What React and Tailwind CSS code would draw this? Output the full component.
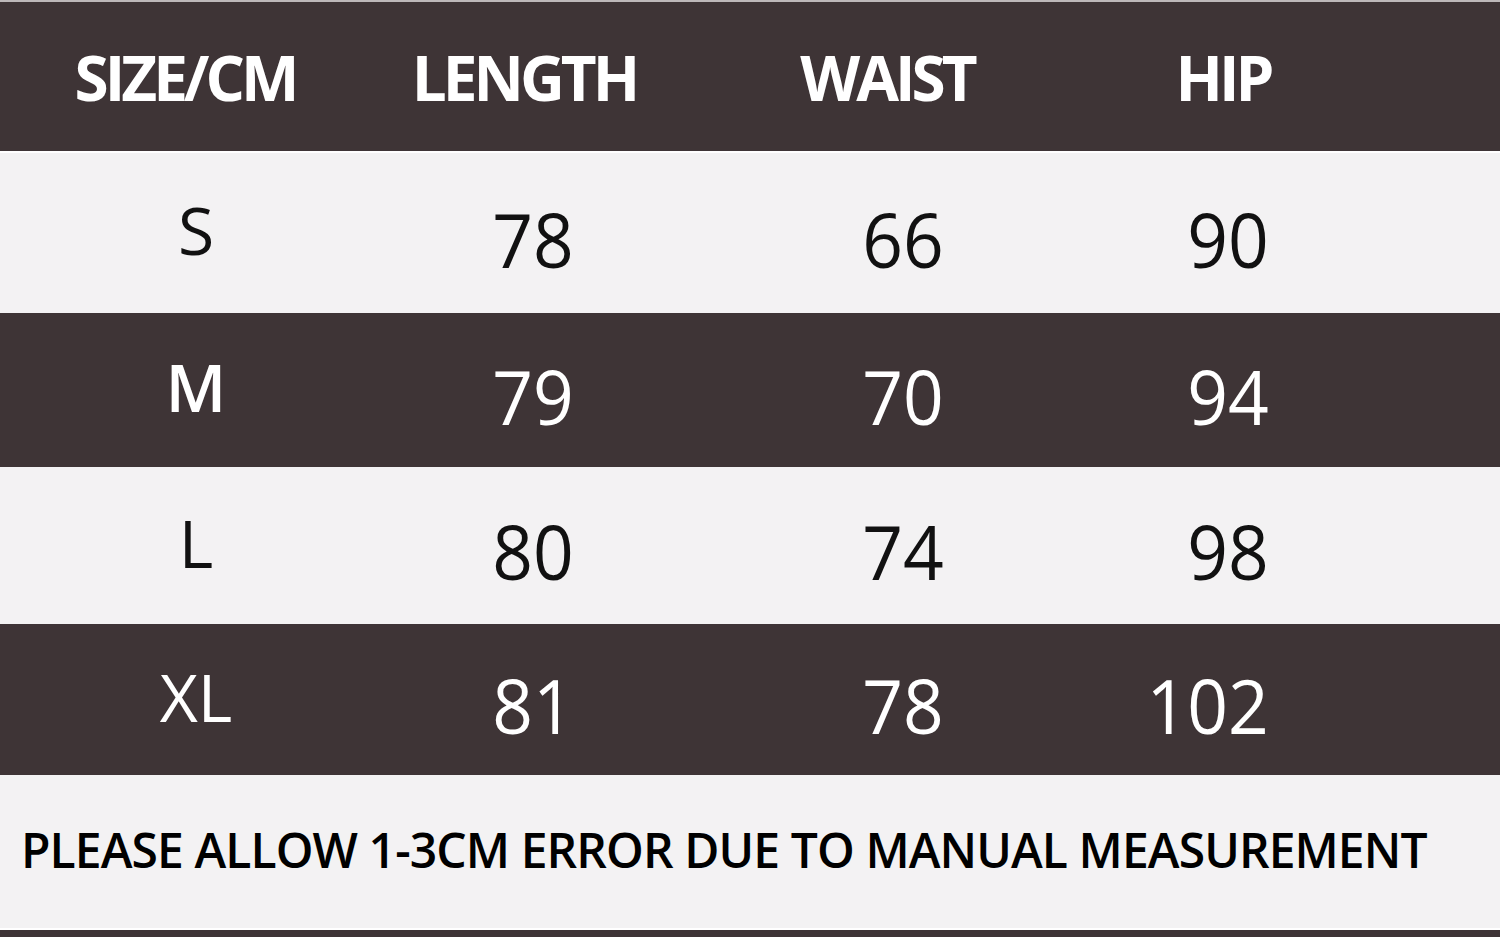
const headers = ["SIZE/CM", "LENGTH", "WAIST", "HIP"];

const rows = [
  { size: "S", values: ["78", "66", "90"], dark: false, h: "h-[160px]", w: "font-normal" },
  { size: "M", values: ["79", "70", "94"], dark: true, h: "h-[154px]", w: "font-semibold" },
  { size: "L", values: ["80", "74", "98"], dark: false, h: "h-[157px]", w: "font-normal" },
  { size: "XL", values: ["81", "78", "102"], dark: true, h: "h-[151px]", w: "font-normal" },
];

const Value = ({ children }) => (
  <div className="text-right text-[75px] leading-none pt-[12px]">
    <span className="inline-block origin-right scale-x-[0.95]">{children}</span>
  </div>
);

const SizeRow = ({ row }) => {
  const tone = row.dark
    ? "bg-[#3e3436] text-white"
    : "bg-[#f3f2f3] text-[#111]";
  return (
    <div
      className={`${tone} ${row.h} grid grid-cols-[392px_182px_370px_325px_1fr] items-center`}
    >
      <div className={`text-center text-[66px] leading-none pb-[8px] ${row.w}`}>
        {row.size}
      </div>
      <Value>{row.values[0]}</Value>
      <Value>{row.values[1]}</Value>
      <Value>{row.values[2]}</Value>
      <div />
    </div>
  );
};

export default function App() {
  return (
    <div
      className="w-[1500px] h-[938px] overflow-hidden bg-white flex flex-col"
      style={{ fontFamily: '"Open Sans", "Noto Sans", sans-serif' }}
    >
      <div className="h-[2px] bg-[#bdb8b9]" />
      {/* header */}
      <div className="h-[149px] bg-[#3e3436] text-white grid grid-cols-[370px_308px_418px_254px_1fr] items-center">
        {headers.map((h) => (
          <div
            key={h}
            className="text-center text-[62px] leading-none font-bold tracking-[-4px]"
          >
            {h}
          </div>
        ))}
        <div />
      </div>
      <div className="h-[2px] bg-white" />
      {rows.map((row) => (
        <SizeRow key={row.size} row={row} />
      ))}
      {/* note */}
      <div className="h-[153px] bg-[#f3f2f3] flex items-center pl-[21px] pb-[4px]">
        <p className="text-[48px] leading-none font-semibold text-black tracking-[-0.9px] whitespace-nowrap">
          PLEASE ALLOW 1-3CM ERROR DUE TO MANUAL MEASUREMENT
        </p>
      </div>
      <div className="h-[2px] bg-white" />
      <div className="h-[7px] bg-[#3e3436]" />
      <div className="flex-1 bg-white" />
    </div>
  );
}
